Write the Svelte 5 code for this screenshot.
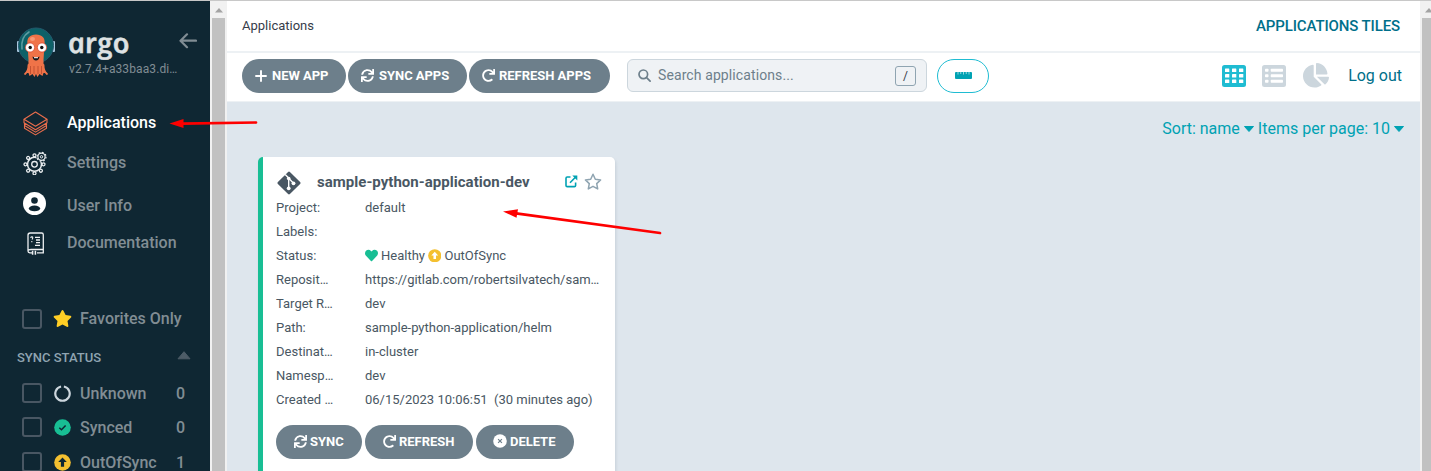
<script>
  const redo = 'M500.33 0h-47.41a12 12 0 0 0-12 12.57l4 82.76A247.42 247.42 0 0 0 256 8C119.34 8 7.9 119.53 8 256.19 8.1 393.07 119.1 504 256 504a247.1 247.1 0 0 0 166.18-63.91 12 12 0 0 0 .48-17.43l-34-34a12 12 0 0 0-16.38-.55A176 176 0 1 1 402.1 157.8l-101.53-4.87a12 12 0 0 0-12.57 12v47.41a12 12 0 0 0 12 12h200.33a12 12 0 0 0 12-12V12a12 12 0 0 0-12-12z';
  const sync = 'M440.65 12.57l4 82.77A247.16 247.16 0 0 0 255.83 8C134.73 8 33.91 94.92 12.29 209.82A12 12 0 0 0 24.09 224h49.05a12 12 0 0 0 11.67-9.26 175.91 175.91 0 0 1 317-56.94l-101.46-4.86a12 12 0 0 0-12.57 12v47.41a12 12 0 0 0 12 12H500a12 12 0 0 0 12-12V12a12 12 0 0 0-12-12h-47.37a12 12 0 0 0-11.98 12.57zM255.83 432a175.61 175.61 0 0 1-146-77.8l101.8 4.87a12 12 0 0 0 12.57-12v-47.4a12 12 0 0 0-12-12H12a12 12 0 0 0-12 12V500a12 12 0 0 0 12 12h47.35a12 12 0 0 0 12-12.6l-4.15-82.57A247.17 247.17 0 0 0 255.83 504c121.11 0 221.93-86.92 243.55-201.82a12 12 0 0 0-11.8-14.18h-49.05a12 12 0 0 0-11.67 9.26A175.86 175.86 0 0 1 255.83 432z';
  const star = 'M259.3 17.8L194 150.2 47.9 171.5c-26.2 3.8-36.7 36.1-17.7 54.6l105.7 103-25 145.5c-4.5 26.3 23.2 46 46.4 33.7L288 439.6l130.7 68.7c23.2 12.2 50.9-7.4 46.4-33.7l-25-145.5 105.7-103c19-18.5 8.5-50.8-17.7-54.6L382 150.2 316.7 17.8c-11.7-23.6-45.6-23.9-57.4 0z';
  const heart = 'M462.3 62.6C407.5 15.9 326 24.3 275.7 76.2L256 96.5l-19.7-20.3C186.1 24.3 104.5 15.9 49.7 62.6c-62.8 53.6-66.1 149.8-9.9 207.9l193.5 199.8c12.5 12.9 32.8 12.9 45.3 0l193.5-199.8c56.3-58.1 53-154.3-9.8-207.9z';
  const pie = 'M527.79 288H290.5l158.03 158.03c6.04 6.04 15.98 6.53 22.19.68 38.7-36.46 65.32-85.61 73.13-140.86 1.34-9.46-6.51-17.85-16.06-17.85zm-15.83-64.8C503.72 103.74 408.26 8.28 288.8.04 279.68-.59 272 7.1 272 16.24V240h223.77c9.14 0 16.82-7.68 16.19-16.8zM224 288V50.71c0-9.55-8.39-17.4-17.84-16.06C86.99 51.49-4.1 155.6.14 280.37 4.5 408.51 114.83 513.59 243.03 511.98c50.4-.63 96.97-16.87 135.26-44.03 7.9-5.6 8.42-17.23 1.57-24.08L224 288z';
  const teeth = [0, 45, 90, 135, 180, 225, 270, 315];
  const statuses = [
    { name: 'Unknown', count: 0, kind: 'unknown' },
    { name: 'Synced', count: 0, kind: 'synced' },
    { name: 'OutOfSync', count: 1, kind: 'outofsync' }
  ];
  const details = [
    ['Reposit…', 'https://gitlab.com/robertsilvatech/sam…'],
    ['Target R…', 'dev'],
    ['Path:', 'sample-python-application/helm'],
    ['Destinat…', 'in-cluster'],
    ['Namesp…', 'dev'],
    ['Created …', '06/15/2023 10:06:51\u00a0 (30 minutes ago)']
  ];
</script>

{#snippet glyph(d, w, h, vw = 512)}
  <svg width={w} height={h} viewBox="0 0 {vw} 512" fill="currentColor"><path {d} /></svg>
{/snippet}

{#snippet upCircle(size, arrow)}
  <svg width={size} height={size} viewBox="0 0 17 17">
    <circle cx="8.5" cy="8.5" r="8.3" fill="#f4c030" />
    <path d="M8.5 3.6l4.3 4.5h-2.7v4.6H6.9V8.1H4.2z" fill={arrow} />
  </svg>
{/snippet}

<div class="page">
  <aside class="sidebar">
    <div class="brand">
      <svg class="mascot" width="38" height="51" viewBox="0 0 38 51">
        <rect x="0" y="14" width="3" height="11" rx="1" fill="#a9c7df" />
        <rect x="35" y="14" width="3" height="11" rx="1" fill="#a9c7df" />
        <circle cx="19" cy="18.500" r="17.500" fill="#0d6168" stroke="#24586c" stroke-width="1" />
        <path d="M5 22C4 14 7 8 12 5" fill="none" stroke="#5d9ca1" stroke-width="1.600" stroke-linecap="round" />
        <path d="M10.500 17C9.500 11 13 7.500 19 7.500S28.500 11 27.500 17L26.500 33c0 7 .5 10.500 3 13l-3 0-1 3-3-2-2 3-1.500-3-1.500 3-2-3-3 2-1-3-3 0c2.500-2.500 3-6 3-13z" fill="#ef7348" />
        <path d="M11.500 38q0 6-3.500 9M26.500 38q0 6 3.500 9" fill="none" stroke="#ef7348" stroke-width="1.800" stroke-linecap="round" />
        <path d="M13.500 39v8M17 39v8M21 39v8M24.500 39v8" stroke="#b94a2d" stroke-width=".8" />
        <ellipse cx="15.500" cy="12" rx="2.500" ry="2" fill="#f79a77" />
        <circle cx="13" cy="20.500" r="4.600" fill="#fff" stroke="#d94b32" stroke-width=".8" />
        <circle cx="25" cy="20.500" r="4.600" fill="#fff" stroke="#d94b32" stroke-width=".8" />
        <circle cx="13.200" cy="20.500" r="1.700" fill="#111" /><circle cx="24.800" cy="20.500" r="1.700" fill="#111" />
        <path d="M15.500 29.500q3.500 2 7 0q-.5 4-3.500 4t-3.500-4z" fill="#14171b" />
        <path d="M17 30.200h4v1h-4z" fill="#fff" />
      </svg>
      <div class="wordmark">
        <div class="argo">argo</div>
        <div class="version">v2.7.4+a33baa3.di…</div>
      </div>
      <svg class="back" width="18" height="16" viewBox="0 0 18 16" fill="none" stroke="#818d94" stroke-width="2.200" stroke-linecap="round" stroke-linejoin="round"><path d="M8 1.300L1.500 7.700 8 14.200M1.800 7.700H17" /></svg>
    </div>

    <nav>
      <div class="nav apps">
        <span class="ico"><svg width="25" height="25" viewBox="0 0 25 25" fill="none" stroke="#e96d4c" stroke-width="1.100" stroke-linejoin="round"><path d="M12.500 1L24 8.300 12.500 15.300 1 8.300z" /><path d="M1 8.300v3.500l11.500 7L24 11.800V8.300M1.500 12.100v2.400l11 6.600 11-6.600v-2.400M1.500 14.800v2.400l11 6.700 11-6.700v-2.400" /></svg></span>
        Applications
      </div>
      <div class="nav">
        <span class="ico"><svg width="24" height="24" viewBox="0 0 24 24" fill="none" stroke="#e9edef">
          <circle cx="11.500" cy="13.300" r="7" stroke-width="1.500" /><circle cx="11.500" cy="13.300" r="2.800" stroke-width="1.300" />
          {#each teeth as a}<circle cx="11.500" cy="4.300" r="1.500" stroke-width="1.300" transform="rotate({a} 11.500 13.300)" />{/each}
          <circle cx="18.500" cy="5.800" r="5.200" fill="#0f2733" stroke="none" />
          <circle cx="18.500" cy="5.800" r="3.600" stroke-width="1.200" /><circle cx="18.500" cy="5.800" r="1.200" />
          <circle cx="18.500" cy="5.800" r="4.500" stroke-width="1.200" stroke-dasharray="1.700 1.830" />
        </svg></span>
        Settings
      </div>
      <div class="nav user">
        <span class="ico"><svg width="23" height="23" viewBox="0 0 23 23"><circle cx="11.500" cy="11.500" r="11.500" fill="#fff" /><circle cx="11.500" cy="8.500" r="3.300" fill="#0f2733" /><ellipse cx="11.500" cy="16.400" rx="5.700" ry="2.800" fill="#0f2733" /></svg></span>
        User Info
      </div>
      <div class="nav docs">
        <span class="ico"><svg width="18" height="23" viewBox="0 0 18 23" fill="none" stroke="#edf0f2" stroke-width="1.300"><path d="M4 17.500C2 17.500 1 18 1 19V3.200Q1 1 3.200 1H14.600Q16.300 1 16.300 2.700V17.500H4M16.300 17v3.800H10M5 20.800H2.800Q1 20.500 1 19M8 5.300h5M9 8h4M9 10.700h4M8 13.400h5" /><path d="M3.800 6Q4 4.600 5.200 4.900T5 7.500M4.800 9v1.200" stroke-width="1.100" /><path d="M5.600 18.800v4M8.400 18.800v4" stroke-width="1.500" /></svg></span>
        Documentation
      </div>
    </nav>

    <div class="filter fav">
      <span class="box"></span>
      <span class="fico star">{@render glyph(star, 19, 17, 576)}</span>
      <span class="name">Favorites Only</span>
    </div>
    <div class="section">
      <span>SYNC STATUS</span>
      <svg width="14" height="9" viewBox="0 0 14 9"><path d="M7 .7L13 7.800H1z" fill="#4d5c67" stroke="#4d5c67" stroke-linejoin="round" /></svg>
    </div>
    {#each statuses as s}
      <div class="filter {s.kind}">
        <span class="box"></span>
        <span class="fico">
          {#if s.kind === 'unknown'}
            <svg width="17" height="17" viewBox="0 0 17 17" fill="none" stroke="#ccd6dd" stroke-width="2.200"><path d="M9.900 1.500a7.200 7.200 0 1 1-2.800 0" /></svg>
          {:else if s.kind === 'synced'}
            <svg width="17" height="17" viewBox="0 0 17 17"><circle cx="8.500" cy="8.500" r="8.300" fill="#18be94" /><path d="M5.300 8.700l2.200 2.100 4.100-4.300" fill="none" stroke="#0f2733" stroke-width="1.500" /></svg>
          {:else}
            {@render upCircle(17, '#0f2733')}
          {/if}
        </span>
        <span class="name">{s.name}</span>
        <span class="count">{s.count}</span>
      </div>
    {/each}
  </aside>

  <div class="scroll left"><svg width="8" height="5" viewBox="0 0 8 5"><path d="M4 0l4 4.500H0z" fill="#a3a3a3" /></svg><div class="thumb"></div></div>

  <main>
    <header><span class="crumb">Applications</span><span class="title">APPLICATIONS TILES</span></header>
    <div class="toolbar">
      <button class="btn new"><svg width="12" height="12" viewBox="0 0 12 12" stroke="currentColor" stroke-width="1.900" stroke-linecap="round"><path d="M6 1v10M1 6h10" /></svg><span>NEW APP</span></button>
      <button class="btn syncapps">{@render glyph(sync, 13, 13)}<span>SYNC APPS</span></button>
      <button class="btn refreshapps">{@render glyph(redo, 13, 13)}<span>REFRESH APPS</span></button>
      <div class="search">
        <svg width="13" height="13" viewBox="0 0 13 13" fill="none" stroke="#6d7f8b" stroke-width="1.700" stroke-linecap="round"><circle cx="5.300" cy="5.300" r="4.300" /><path d="M8.600 8.600l3.500 3.500" /></svg>
        <span class="ph">Search applications...</span>
        <span class="key">/</span>
      </div>
      <button class="ruler"><svg width="17" height="7" viewBox="0 0 17 7"><rect width="17" height="7" rx="1" fill="#00a2b3" /><path d="M3 0v2.500M5.750 0v2M8.500 0v2.500M11.250 0v2M14 0v2.500" stroke="#d9f2f5" stroke-width=".7" /></svg></button>
      <div class="views">
        <svg width="24" height="22" viewBox="0 0 24 22"><rect width="24" height="22" rx="2.500" fill="#1fbcd2" />
          {#each [3.500, 9, 14.500] as y}{#each [3, 10, 17] as x}<rect {x} {y} width="4.300" height="3.600" rx=".4" fill="#fff" />{/each}{/each}
        </svg>
        <svg class="list" width="24" height="22" viewBox="0 0 24 22"><rect width="24" height="22" rx="2.500" fill="#ccd6dd" />
          {#each [3.700, 9.200, 14.700] as y}<rect x="3" {y} width="3.500" height="3" rx=".7" fill="#fff" /><rect x="8.700" {y} width="12.300" height="3" rx=".7" fill="#fff" />{/each}
        </svg>
        <span class="pie">{@render glyph(pie, 26, 24.500, 544)}</span>
        <span class="logout">Log out</span>
      </div>
    </div>
    <div class="content">
      <div class="sort">
        <span>Sort: name</span><svg width="12" height="8" viewBox="0 0 12 8"><path d="M1.500 1.500h9L6 6.500z" fill="#00a2b3" stroke="#00a2b3" stroke-linejoin="round" /></svg>
        <span class="items">Items per page: 10</span><svg width="12" height="8" viewBox="0 0 12 8"><path d="M1.500 1.500h9L6 6.500z" fill="#00a2b3" stroke="#00a2b3" stroke-linejoin="round" /></svg>
      </div>
      <article class="card">
        <div class="head">
          <svg width="26" height="24" viewBox="0 0 24 24"><rect x="3.500" y="3.500" width="17" height="17" rx="1.300" transform="rotate(45 12 12)" fill="#495763" /><path d="M8.200 3.500L11.700 7v11M12 7.500l4.500 4.700" fill="none" stroke="#fff" stroke-width="1.400" /><circle cx="11.700" cy="7.500" r="1.800" fill="#fff" /><circle cx="11.700" cy="17.300" r="1.900" fill="#fff" /><circle cx="16.500" cy="12.300" r="1.900" fill="#fff" /></svg>
          <span class="appname">sample-python-application-dev</span>
          <svg class="ext" width="13" height="13" viewBox="0 0 13 13" fill="none" stroke="#00a2b3" stroke-width="1.600"><path d="M5.500 2H2.200Q1 2 1 3.200v7.200q0 1.200 1.200 1.200h7.200q1.200 0 1.200-1.200V7.500M5 7.700L10.700 2" /><path d="M7.300.5h5v5z" fill="#00a2b3" stroke="none" /></svg>
          <svg class="outline" width="18" height="17" viewBox="0 0 18 17" fill="none" stroke="#8fa4b1" stroke-width="1.500" stroke-linejoin="round"><path d="M9 1.300l2.300 4.900 5.300.7-3.900 3.700 1 5.300L9 13.300l-4.700 2.600 1-5.300L1.400 6.900l5.300-.7z" /></svg>
        </div>
        <div class="row"><span>Project:</span><span>default</span></div>
        <div class="row"><span>Labels:</span><span></span></div>
        <div class="row"><span>Status:</span><span class="state"><i class="heart">{@render glyph(heart, 13, 13)}</i><b>Healthy</b><i>{@render upCircle(13.500, '#fff')}</i><b>OutOfSync</b></span></div>
        {#each details as [label, value]}
          <div class="row"><span>{label}</span><span>{value}</span></div>
        {/each}
        <div class="actions">
          <button class="btn sync">{@render glyph(sync, 13, 13)}<span>SYNC</span></button>
          <button class="btn refresh">{@render glyph(redo, 13, 13)}<span>REFRESH</span></button>
          <button class="btn delete"><svg width="14" height="14" viewBox="0 0 14 14"><circle cx="7" cy="7" r="6.800" fill="#fff" /><path d="M5.100 5.100l3.800 3.800M8.900 5.100L5.100 8.900" stroke="#6d7f8b" stroke-width="1.200" /></svg><span>DELETE</span></button>
        </div>
      </article>
    </div>
  </main>

  <div class="scroll right"><svg width="8" height="5" viewBox="0 0 8 5"><path d="M4 0l4 4.500H0z" fill="#a3a3a3" /></svg><div class="thumb"></div></div>

  <svg class="arrows" width="1431" height="471" viewBox="0 0 1431 471" fill="#fe0000" stroke="#fe0000">
    <path d="M182 123.700L256 122.500M516 213.300L660 233" stroke-width="2.700" stroke-linecap="round" />
    <path d="M169.500 123.500l14-4.500v9zM503 211.500l15-2.300-1.500 8.600z" stroke="none" />
  </svg>
</div>

<style>
  :global(body) { margin: 0; }
  .page { position: relative; display: flex; box-sizing: border-box; width: 1431px; height: 471px; overflow: hidden; border-top: 1px solid #c8c8c8; font-family: Roboto, sans-serif; background: #dee6ed; }
  svg { display: block; flex: none; }
  .sidebar { width: 210px; flex: none; background: #0f2733; color: #818d94; overflow: hidden; }
  .brand { display: flex; height: 101px; }
  .mascot { margin: 26px 0 0 17px; }
  .wordmark { width: 110px; margin-left: 14px; }
  .argo { margin-top: 23px; height: 37px; line-height: 37px; font-family: "Open Sans", sans-serif; font-style: italic; font-size: 28px; font-weight: 600; color: #dee2e3; -webkit-text-stroke: .5px #dee2e3; transform-origin: 0 29px; transform: translateX(.5px) skewX(12deg) scaleX(1.05); }
  .version { font-size: 12px; line-height: 16px; letter-spacing: .1px; white-space: nowrap; }
  .back { margin: 32px 0 0; }
  .nav { display: flex; align-items: center; height: 40px; font-size: 16px; font-weight: 500; }
  .ico { width: 44px; margin-left: 23px; display: flex; align-items: center; }
  .ico svg { margin-top: 2px; }
  .apps .ico svg { margin-top: 3px; }
  .docs .ico { box-sizing: border-box; padding-left: 4px; }
  .apps { color: #fff; }
  .user { height: 44px; padding-top: 2px; box-sizing: border-box; }
  .user .ico svg { margin-top: -4px; }
  .docs { height: 32px; }
  .docs .ico svg { margin-top: 3px; }
  .filter { display: flex; align-items: center; height: 34px; font-size: 16px; font-weight: 500; }
  .box { box-sizing: border-box; width: 20px; height: 20px; margin-left: 22px; border: 2px solid #495763; border-radius: 3px; }
  .fico { width: 26px; margin-left: 12px; }
  .star { color: #ffce25; }
  .star svg { margin: -2px 0 0 -1px; }
  .fav { margin-top: 44px; }
  .fav .name { margin-top: -1px; }
  .name { flex: 1; }
  .count { width: 34px; }
  .section { display: flex; align-items: center; justify-content: space-between; height: 28px; margin-top: 7px; padding: 0 19px 0 17px; font-size: 13px; font-weight: 500; color: #8fa4b1; }
  .section svg { margin-top: -3px; }
  .unknown { margin-top: 5px; }
  .outofsync { height: 36px; }
  .scroll { box-sizing: border-box; flex: none; height: 470px; padding: 7px 2px 0; background: #f1f1f1; overflow: hidden; }
  .scroll svg { margin: 0 0 5px 2.500px; }
  .left { width: 17px; }
  .right { width: 11px; padding-right: 0; }
  .thumb { height: 460px; background: #c1c1c1; }
  main { width: 1193px; flex: none; }
  header { display: flex; justify-content: space-between; align-items: center; box-sizing: border-box; height: 52px; padding: 0 20px 0 15px; border-bottom: 2px solid #edf1f4; background: #fff; }
  .crumb { margin-top: -1px; font-size: 13px; color: #363c4a; }
  .title { font-size: 15px; font-weight: 500; letter-spacing: -.12px; color: #006f8a; }
  .toolbar { display: flex; align-items: center; box-sizing: border-box; height: 49px; padding: 0 18px 3px 15px; gap: 2px; border-bottom: 1px solid #edf1f4; background: #fff; }
  button { font-family: inherit; }
  .btn { display: flex; align-items: center; box-sizing: border-box; height: 34px; padding: 0 0 0 13px; border: 0; border-radius: 17px; background: #6d7f8b; color: #fff; font-size: 13px; font-weight: 700; letter-spacing: -.03px; white-space: nowrap; gap: 4px; }
  .new { width: 104px; gap: 5px; }
  .syncapps { width: 119px; gap: 5px; }
  .refreshapps { width: 141px; }
  .search { display: flex; align-items: center; box-sizing: border-box; width: 300px; height: 33px; margin-left: 15px; padding: 0 10px; border: 1px solid #ccd6dd; border-radius: 6px; background: #eff2f5; color: #6d7f8b; }
  .ph { flex: 1; margin: -1px 0 0 7px; font-size: 14px; letter-spacing: .1px; }
  .key { box-sizing: border-box; width: 21px; height: 20px; border: 1px solid #8fa4b1; border-radius: 3px; text-align: center; font-size: 12px; line-height: 19px; color: #363c4a; }
  .ruler { display: flex; align-items: center; justify-content: center; box-sizing: border-box; width: 52px; height: 34px; margin-left: 8px; padding: 0 0 1px; border: 1px solid #1fbcd2; border-radius: 17px; background: #fff; }
  .views { display: flex; align-items: center; margin-left: auto; }
  .list { margin-left: 16px; }
  .pie { margin-left: 17px; color: #ccd6dd; }
  .logout { margin-left: 19px; color: #006f8a; font-size: 16px; }
  .content { height: 369px; background: #dee6ed; }
  .sort { display: flex; align-items: center; justify-content: flex-end; box-sizing: border-box; height: 55px; padding: 0 15px 2px 0; font-size: 16px; color: #00a2b3; }
  .sort svg { margin: 1px 0 0 3px; }
  .items { margin-left: 3px; }
  .card { box-sizing: border-box; width: 357px; height: 350px; margin-left: 31px; padding: 13px 13px 0; border-left: 5px solid #18be94; border-radius: 5px; background: #fff; box-shadow: 1px 2px 3px rgba(109,127,139,.2); color: #495763; }
  .head { display: flex; align-items: center; box-sizing: border-box; height: 26px; padding-bottom: 2px; }
  .head > svg:first-child { margin-top: 2px; }
  .appname { width: 248px; margin-left: 15px; font-size: 15px; font-weight: 700; letter-spacing: .03px; }
  .outline { margin: -1px 0 0 6px; }
  .ext { margin-top: -1px; }
  .row { display: grid; grid-template-columns: 89px 1fr; height: 24px; line-height: 24px; font-size: 13px; white-space: nowrap; }
  .state { display: flex; align-items: center; gap: 3px; }
  .state i { margin-top: -1px; }
  .state b { font-weight: 400; }
  .heart { color: #18be94; }
  .actions { display: flex; gap: 3px; margin-top: 13px; }
  .actions .btn { padding-bottom: 2px; gap: 3px; }
  .sync { width: 86px; padding-left: 18px; }
  .refresh { width: 108px; padding-left: 18px; }
  .delete { width: 98px; padding-left: 17px; }
  .arrows { position: absolute; left: 0; top: -1px; pointer-events: none; }
</style>
